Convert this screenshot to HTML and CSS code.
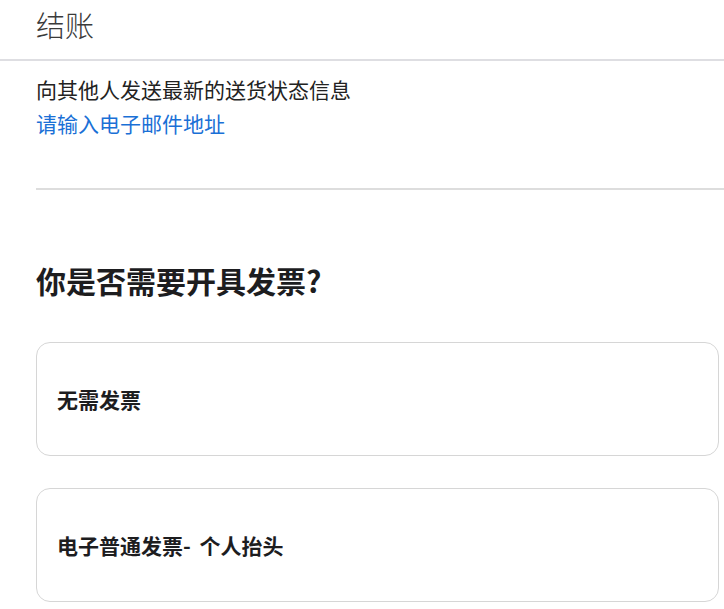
FILE: index.html
```html
<!DOCTYPE html>
<html lang="zh-CN">
<head>
    <meta charset="UTF-8">
    <meta name="viewport" content="width=device-width, initial-scale=1.0">
    <title>结账</title>
    <link rel="stylesheet" href="styles.css">
</head>
<body>
    <header class="page-header">
        <h1>结账</h1>
    </header>

    <section class="notify">
        <p class="notify-text">向其他人发送最新的送货状态信息</p>
        <a class="notify-link" href="#">请输入电子邮件地址</a>
    </section>

    <section class="invoice">
        <h2>你是否需要开具发票?</h2>
        <div class="option">无需发票</div>
        <div class="option">电子普通发票- 个人抬头</div>
    </section>
</body>
</html>
```

FILE: styles.css
```css
body {
    margin: 0;
    font-family: "Noto Sans CJK SC", "Noto Sans", sans-serif;
    color: #333333;
    background-color: #ffffff;
}
.page-header {
    height: 61px;
    padding-top: 5px;
    box-sizing: border-box;
    border-bottom: 2px solid #dedee2;
}
.page-header h1 {
    margin: 0 0 0 36px;
    font-size: 29px;
    font-weight: 300;
    line-height: 38px;
    color: #3a3a3a;
}
.notify {
    margin-left: 36px;
    padding: 11px 0 48px;
    border-bottom: 2px solid #dddddd;
}
.notify-text {
    margin: 0;
    font-size: 21px;
    line-height: 34px;
    color: #222222;
}
.notify-link {
    display: block;
    font-size: 21px;
    line-height: 34px;
    color: #1a70d6;
    text-decoration: none;
}
.invoice {
    padding: 70px 5px 0 36px;
}
.invoice h2 {
    margin: 0 0 42px;
    font-size: 30px;
    font-weight: 700;
    line-height: 40px;
    color: #1d1d1f;
}
.option {
    display: flex;
    align-items: center;
    height: 114px;
    box-sizing: border-box;
    padding-left: 20px;
    margin-bottom: 32px;
    border: 1px solid #d6d6d6;
    border-radius: 14px;
    font-size: 21px;
    font-weight: 700;
    word-spacing: 4px;
    color: #1d1d1f;
}
```
